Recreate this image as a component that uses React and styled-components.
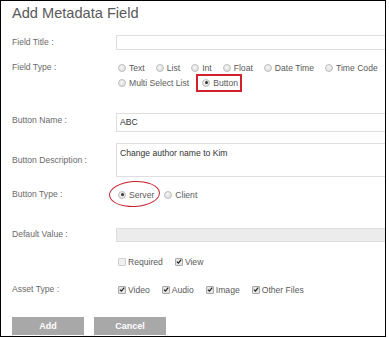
import styled, { createGlobalStyle } from 'styled-components';

const GlobalStyle = createGlobalStyle`
  html, body {
    margin: 0;
    background: #fff;
  }
  body {
    font-family: "Liberation Sans", Arial, sans-serif;
  }
`;

const Frame = styled.div`
  width: 386px;
  height: 337px;
  box-sizing: border-box;
  border: 1px solid #000;
  overflow: hidden;
  padding-left: 11px;
  background: #fff;
`;

const Title = styled.h1`
  margin: 3px 0 0;
  font-size: 14.6px;
  line-height: 18px;
  font-weight: 400;
  color: #595959;
`;

const Row = styled.div`
  display: flex;
  align-items: ${(p) => p.$align || 'center'};
  margin-top: ${(p) => p.$mt}px;
`;

const Label = styled.div`
  flex: none;
  width: 105px;
  font-size: 8.6px;
  line-height: 15px;
  color: #6a6a6a;
  white-space: nowrap;
`;

const Field = styled.div`
  flex: none;
  width: 280px;
  height: ${(p) => p.$h}px;
  margin-left: -1px;
  box-sizing: border-box;
  border: 1px solid #dedede;
  background: ${(p) => (p.$disabled ? '#ececec' : '#fff')};
  padding: ${(p) => (p.$multi ? '4px 3px' : '0 3px')};
  display: flex;
  align-items: ${(p) => (p.$multi ? 'flex-start' : 'center')};
  font-size: 8.6px;
  line-height: 11px;
  color: #333;
`;

const Options = styled.div`
  display: flex;
  flex-direction: column;
  padding-left: 1px;
`;

const OptionLine = styled.div`
  display: flex;
  align-items: center;
  gap: ${(p) => p.$gap || 11}px;
  height: 15px;
`;

const Option = styled.label`
  position: relative;
  display: inline-flex;
  align-items: center;
  gap: ${(p) => (p.$check ? 2 : 3)}px;
  height: 14px;
  font-size: 8.6px;
  color: #5a5a5a;
  white-space: nowrap;
  ${(p) =>
    p.$boxed &&
    `
    padding: 0 2px 0 4px;
    margin-left: -1px;
    outline: 2px solid #d4202c;
    outline-offset: 0;
  `}
`;

const Radio = styled.span`
  flex: none;
  width: 8px;
  height: 8px;
  box-sizing: border-box;
  border-radius: 50%;
  border: 1px solid #bdbdbd;
  background: radial-gradient(circle at 40% 35%, #f6f6f6, #d8d8d8);
  display: flex;
  align-items: center;
  justify-content: center;
  &::after {
    content: '';
    width: 3px;
    height: 3px;
    border-radius: 50%;
    background: ${(p) => (p.$on ? '#333' : 'transparent')};
  }
`;

const Box = styled.span`
  flex: none;
  width: 8px;
  height: 8px;
  box-sizing: border-box;
  border: 1px solid ${(p) => (p.$on ? '#a8a8a8' : '#cfcfcf')};
  border-radius: 1px;
  background: ${(p) => (p.$on ? '#e6e6e6' : '#f0f0f0')};
  display: flex;
  align-items: center;
  justify-content: center;
`;

const Ellipse = styled.span`
  position: absolute;
  left: -9px;
  top: -7px;
  width: 51px;
  height: 26px;
  box-sizing: border-box;
  border: 1.5px solid #c8202c;
  border-radius: 50%;
  transform: rotate(-3deg);
  pointer-events: none;
`;

const Buttons = styled.div`
  display: flex;
  gap: 10px;
  margin-top: 20px;
`;

const Button = styled.button`
  width: 72px;
  height: 18px;
  border: none;
  padding: 0;
  background: #a8a8a8;
  color: #fff;
  font-family: inherit;
  font-weight: 700;
  font-size: 9px;
`;

const Check = () => (
  <svg width="7" height="7" viewBox="0 0 8 8">
    <path d="M1.2 4.2 L3.2 6.2 L6.9 1.4" fill="none" stroke="#222" strokeWidth="1.6" />
  </svg>
);

const RadioOption = ({ on, boxed, children, circled }) => (
  <Option $boxed={boxed}>
    <Radio $on={on} />
    {children}
    {circled && <Ellipse />}
  </Option>
);

const CheckOption = ({ on, children }) => (
  <Option $check>
    <Box $on={on}>{on && <Check />}</Box>
    {children}
  </Option>
);

export default function App() {
  return (
    <>
      <GlobalStyle />
      <Frame>
        <Title>Add Metadata Field</Title>

        <Row $mt={13}>
          <Label>Field Title :</Label>
          <Field $h={15} />
        </Row>

        <Row $mt={10} $align="flex-start">
          <Label>Field Type :</Label>
          <Options>
            <OptionLine>
              <RadioOption>Text</RadioOption>
              <RadioOption>List</RadioOption>
              <RadioOption>Int</RadioOption>
              <RadioOption>Float</RadioOption>
              <RadioOption>Date Time</RadioOption>
              <RadioOption>Time Code</RadioOption>
            </OptionLine>
            <OptionLine $gap={10}>
              <RadioOption>Multi Select List</RadioOption>
              <RadioOption on boxed>Button</RadioOption>
            </OptionLine>
          </Options>
        </Row>

        <Row $mt={23} $align="flex-start">
          <Label>Button Name :</Label>
          <Field $h={19}>ABC</Field>
        </Row>

        <Row $mt={11}>
          <Label>Button Description :</Label>
          <Field $h={34} $multi>
            Change author name to Kim
          </Field>
        </Row>

        <Row $mt={10}>
          <Label>Button Type :</Label>
          <Options>
            <OptionLine $gap={10}>
              <RadioOption on circled>Server</RadioOption>
              <RadioOption>Client</RadioOption>
            </OptionLine>
          </Options>
        </Row>

        <Row $mt={25}>
          <Label>Default Value :</Label>
          <Field $h={14} $disabled />
        </Row>

        <Row $mt={12}>
          <Label />
          <Options>
            <OptionLine $gap={12}>
              <CheckOption>Required</CheckOption>
              <CheckOption on>View</CheckOption>
            </OptionLine>
          </Options>
        </Row>

        <Row $mt={13}>
          <Label>Asset Type :</Label>
          <Options>
            <OptionLine $gap={12}>
              <CheckOption on>Video</CheckOption>
              <CheckOption on>Audio</CheckOption>
              <CheckOption on>Image</CheckOption>
              <CheckOption on>Other Files</CheckOption>
            </OptionLine>
          </Options>
        </Row>

        <Buttons>
          <Button>Add</Button>
          <Button>Cancel</Button>
        </Buttons>
      </Frame>
    </>
  );
}
